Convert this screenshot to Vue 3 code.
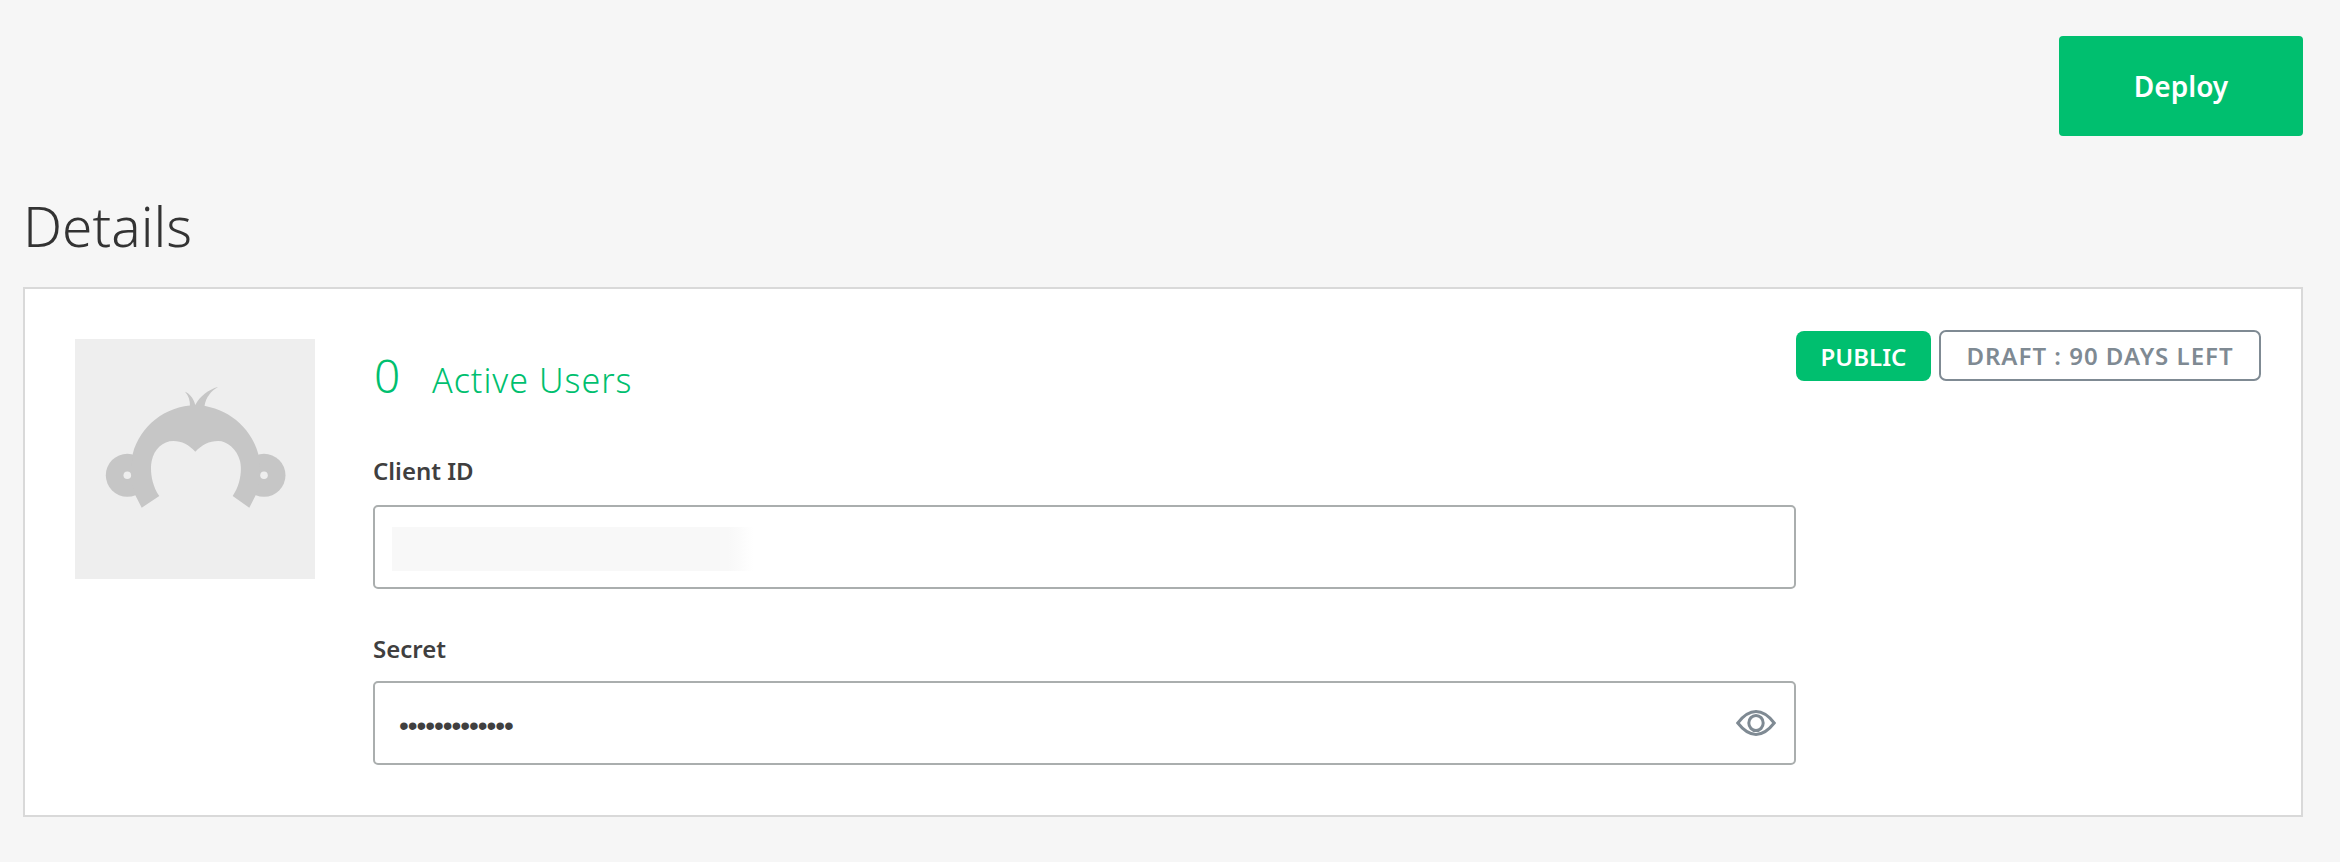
<template>
  <div class="page">
    <div class="toolbar">
      <button class="deploy-btn" type="button">Deploy</button>
    </div>

    <h2 class="section-title">Details</h2>

    <section class="card">
      <div class="app-logo">
        <svg viewBox="0 0 240 240" width="240" height="240" aria-hidden="true">
          <circle cx="52.3" cy="136.3" r="21.5" fill="#c6c6c6" />
          <circle cx="189" cy="136.3" r="21.5" fill="#c6c6c6" />
          <circle cx="52.3" cy="136.3" r="3.8" fill="#eeeeee" />
          <circle cx="189" cy="136.3" r="3.8" fill="#eeeeee" />
          <path
            fill="#c6c6c6"
            d="M66.7 168.7L60.7 157C57 150 55.5 135 57.7 115C65 87 90 67 120.3 66C150 67 176 87 183.3 115C185.5 135 184 150 180.3 157L174.3 168.7L157.7 157C166 145 167 130 165 122C162 110 152 102 143.3 102C134 102 127 106 120.3 112.7C114 106 107 102 98.3 102C88 102 79 110 76.7 122C75 130 76 145 84.3 157Z"
          />
          <path
            fill="#c6c6c6"
            d="M110 52.7C114.5 54.5 118.5 59 120.3 66C125 57 133 51 143.3 47.7C136 52 131 58 129.5 67L115 67C115 61 113.5 56.5 110 52.7Z"
          />
        </svg>
      </div>

      <div class="app-fields">
        <div class="stat">
          <span class="stat-count">0</span>
          <span class="stat-label">Active Users</span>
        </div>

        <label class="field-label first">Client ID</label>
        <div class="field">
          <div class="redacted"></div>
        </div>

        <label class="field-label">Secret</label>
        <div class="field">
          <span class="secret-dots">{{ secretDots }}</span>
          <svg class="eye" viewBox="0 0 40 26" width="40" height="26" aria-hidden="true">
            <path
              d="M1.8 13C8 5 14 1.6 20 1.6C26 1.6 32 5 38.2 13C32 21 26 24.4 20 24.4C14 24.4 8 21 1.8 13Z"
            />
            <ellipse cx="20" cy="13" rx="7.2" ry="7.6" />
          </svg>
        </div>
      </div>

      <div class="badges">
        <span class="badge badge-public">PUBLIC</span>
        <span class="badge badge-draft">DRAFT : 90 DAYS LEFT</span>
      </div>
    </section>
  </div>
</template>

<script setup>
const secretDots = '•'.repeat(13);
</script>

<style>
body {
  background: #f6f6f6;
}
</style>

<style scoped>
.page {
  box-sizing: border-box;
  width: 2340px;
  height: 862px;
  padding: 36px 37px 0 23px;
  background: #f6f6f6;
  font-family: "Noto Sans", sans-serif;
  overflow: hidden;
}

.toolbar {
  display: flex;
  justify-content: flex-end;
}

.deploy-btn {
  width: 244px;
  height: 100px;
  border: 0;
  border-radius: 4px;
  background: #00bf6f;
  color: #fff;
  font-family: inherit;
  font-size: 28px;
  font-weight: 600;
}

.section-title {
  margin: 50px 0 0;
  padding-top: 3px;
  height: 98px;
  color: #333333;
  font-size: 55px;
  font-weight: 300;
  line-height: 74px;
}

.card {
  box-sizing: border-box;
  display: flex;
  align-items: flex-start;
  height: 530px;
  padding: 50px 0 0 50px;
  border: 2px solid #d9d9d9;
  background: #fff;
}

.app-logo {
  flex: none;
  width: 240px;
  height: 240px;
  margin-right: 58px;
  background: #eeeeee;
}

.app-fields {
  flex: none;
  width: 1423px;
}

.stat {
  display: flex;
  align-items: baseline;
  box-sizing: border-box;
  height: 74px;
  padding: 6px 0 0 1px;
  color: #00bf6f;
  line-height: 60px;
}

.stat-count {
  width: 58px;
  font-size: 46px;
  font-weight: 300;
}

.stat-label {
  font-size: 34px;
  font-weight: 300;
  letter-spacing: 1px;
}

.field-label {
  display: block;
  height: 44px;
  margin-top: 48px;
  color: #403f3f;
  font-size: 24px;
  font-weight: 600;
  line-height: 24px;
}

.field-label.first {
  height: 46px;
  margin-top: 46px;
}

.field {
  box-sizing: border-box;
  display: flex;
  align-items: center;
  justify-content: space-between;
  height: 84px;
  padding: 0 17px;
  border: 2px solid #aaaeae;
  border-radius: 5px;
  background: #fff;
}

.redacted {
  width: 362px;
  height: 44px;
  margin-top: 3px;
  background: linear-gradient(90deg, #f8f8f8 93%, #ffffff);
}

.secret-dots {
  margin: 5px 0 0 7px;
  color: #403f3f;
  font-family: "Liberation Sans", sans-serif;
  font-size: 28px;
  letter-spacing: -1.05px;
}

.eye {
  flex: none;
  margin-right: 1px;
}

.eye path,
.eye ellipse {
  fill: none;
  stroke: #7f8a93;
  stroke-width: 3;
}

.badges {
  display: flex;
  align-items: flex-end;
  gap: 8px;
  margin-top: -9px;
}

.badge {
  box-sizing: border-box;
  display: flex;
  align-items: center;
  justify-content: center;
  font-size: 24px;
  font-weight: 600;
  white-space: nowrap;
}

.badge-public {
  width: 135px;
  height: 50px;
  border-radius: 8px;
  background: #00bf6f;
  color: #fff;
}

.badge-draft {
  width: 322px;
  height: 51px;
  border: 2px solid #7f8a93;
  border-radius: 7px;
  color: #7f8a93;
  letter-spacing: 1px;
}
</style>
